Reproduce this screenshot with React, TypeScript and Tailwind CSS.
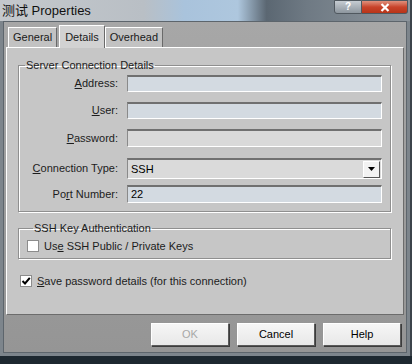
import React from 'react';

const font = { fontFamily: '"Liberation Sans", "Noto Sans CJK SC", Arial, sans-serif' };

// text field with the sunken classic look
const Field = ({ value, tone = 'blue', h = 'h-[17px]' }: { value?: string; tone?: 'blue' | 'gray'; h?: string }) => (
  <div
    className={`flex-1 ${h} flex items-center pl-[3px] text-[11px] text-black border-t-2 border-l border-t-[#707070] border-l-[#8a8a8a] border-b border-r border-b-white border-r-white ${
      tone === 'blue' ? 'bg-[#d3dae1]' : 'bg-[#d9d9d9]'
    }`}
  >
    {value}
  </div>
);

const Row = ({ label, children, mt }: { label: React.ReactNode; children: React.ReactNode; mt: string }) => (
  <div className={`flex items-center ${mt}`}>
    <div className="w-[108px] shrink-0 pr-[9px] text-right text-[11px] text-[#1c1c1c] whitespace-nowrap">{label}</div>
    {children}
  </div>
);

const Checkbox = ({ checked }: { checked?: boolean }) => (
  <div className="w-[12px] h-[12px] bg-white border border-[#8c8c8c] flex items-center justify-center">
    {checked && (
      <svg width="10" height="10" viewBox="0 0 10 10">
        <path d="M1.5 5 L4 7.5 L8.8 1.8" stroke="black" strokeWidth="2" fill="none" />
      </svg>
    )}
  </div>
);

const Btn = ({ text, disabled }: { text: string; disabled?: boolean }) => (
  <div
    className={`w-[78px] h-[23px] flex items-center justify-center text-[11px] bg-gradient-to-b from-[#f6f6f6] to-[#e8e8e8] border border-t-white border-l-white border-r-[#5a5a5a] border-b-[#5a5a5a] shadow-[1px_1px_0_#3c3c3c] ${
      disabled ? 'text-[#a8a8a8]' : 'text-black'
    }`}
  >
    {text}
  </div>
);

export default function App() {
  return (
    <div className="w-[412px] h-[364px] bg-[#1d2830] overflow-hidden" style={font}>
      <div className="h-[356px] flex flex-col bg-[#7d858c] border-r-2 border-r-[#3c444b]">
        {/* title bar */}
        <div className="h-[21px] relative flex items-center bg-[linear-gradient(90deg,#c4c8cc_0%,#b9bfc5_35%,#a9c3dc_45%,#aec7de_58%,#5b6772_65%,#6f7a84_75%,#8d959c_100%)]">
          <span className="pl-[2px] text-[13px] text-[#101010]">测试 Properties</span>
          <div className="absolute right-[2px] top-0 flex">
            <div className="w-[28px] h-[14px] rounded-bl-[3px] border border-[#50585f] bg-gradient-to-b from-[#c6ccd2] to-[#8d969e] flex items-center justify-center text-[10px] font-bold text-white leading-none">
              ?
            </div>
            <div className="w-[46px] h-[14px] rounded-br-[3px] border border-l-0 border-[#50585f] bg-gradient-to-b from-[#e0907c] via-[#c8432a] to-[#b83418] flex items-center justify-center">
              <svg width="10" height="9" viewBox="0 0 10 9">
                <path d="M1.5 1 L8.5 8 M8.5 1 L1.5 8" stroke="white" strokeWidth="2.2" />
              </svg>
            </div>
          </div>
        </div>

        {/* client area */}
        <div className="flex-1 mx-[3px] mb-[3px] bg-gradient-to-b from-[#a7a7a7] to-[#959595] border border-[#5d656c] flex flex-col">
          {/* tabs */}
          <div className="flex items-end pl-[4px] pt-[2px] h-[25px]">
            <div className="h-[20px] px-[4px] flex items-center text-[11px] text-[#1a1a1a] bg-[#c2c2c2] border border-b-0 border-t-white border-l-white border-r-[#6a6a6a]">
              General
            </div>
            <div className="h-[23px] px-[5px] ml-[2px] flex items-center text-[11px] text-[#1a1a1a] bg-[#d2d2d2] border border-b-0 border-t-white border-l-white border-r-[#6a6a6a] relative top-px">
              Details
            </div>
            <div className="h-[20px] px-[4px] flex items-center text-[11px] text-[#1a1a1a] bg-[#c2c2c2] border border-b-0 border-t-white border-l-white border-r-[#6a6a6a]">
              Overhead
            </div>
          </div>

          {/* tab page */}
          <div className="h-[268px] mx-[2px] bg-[#c6c6c6] border border-t-white border-l-white border-r-[#6c6c6c] border-b-[#6c6c6c] px-[11px] pt-[11px]">
            <fieldset className="border border-[#8f8f8f] shadow-[1px_1px_0_#fff,inset_1px_1px_0_#fff] pr-[8px] pb-[8px] w-[373px]">
              <legend className="ml-[6px] px-[1px] text-[11px] text-[#1c1c1c] leading-[12px]">Server Connection Details</legend>
              <Row mt="mt-[4px]" label={<><u>A</u>ddress:</>}>
                <Field />
              </Row>
              <Row mt="mt-[10px]" label={<><u>U</u>ser:</>}>
                <Field />
              </Row>
              <Row mt="mt-[10px]" label={<><u>P</u>assword:</>}>
                <Field tone="gray" h="h-[18px]" />
              </Row>
              <Row mt="mt-[11px]" label={<><u>C</u>onnection Type:</>}>
                <div className="flex-1 h-[21px] flex items-center pl-[3px] text-[11px] text-black bg-[#dadada] border-t-2 border-l border-t-[#707070] border-l-[#8a8a8a] border-b border-r border-b-white border-r-white">
                  <span className="flex-1">SSH</span>
                  <div className="w-[17px] h-[17px] mr-px bg-[#f2f2f2] border border-t-white border-l-white border-r-[#555] border-b-[#555] flex items-center justify-center">
                    <svg width="7" height="4" viewBox="0 0 7 4">
                      <path d="M0 0 H7 L3.5 4 Z" fill="black" />
                    </svg>
                  </div>
                </div>
              </Row>
              <Row mt="mt-[6px]" label={<>Po<u>r</u>t Number:</>}>
                <Field value="22" h="h-[18px]" />
              </Row>
            </fieldset>

            <fieldset className="mt-[10px] border border-[#8f8f8f] shadow-[1px_1px_0_#fff,inset_1px_1px_0_#fff] w-[373px] h-[37px] pl-[8px]">
              <legend className="ml-[6px] px-[1px] text-[11px] text-[#1c1c1c] leading-[12px]">SSH Key Authentication</legend>
              <div className="flex items-center gap-[5px] mt-[4px] text-[11px] text-[#1c1c1c]">
                <Checkbox />
                <span>
                  Us<u>e</u> SSH Public / Private Keys
                </span>
              </div>
            </fieldset>

            <div className="flex items-center gap-[5px] mt-[14px] ml-[2px] text-[11px] text-[#1c1c1c]">
              <Checkbox checked />
              <span>
                <u>S</u>ave password details (for this connection)
              </span>
            </div>
          </div>

          {/* dialog buttons */}
          <div className="flex justify-end gap-[8px] pr-[5px] mt-[8px]">
            <Btn text="OK" disabled />
            <Btn text="Cancel" />
            <Btn text="Help" />
          </div>
        </div>
      </div>
    </div>
  );
}
